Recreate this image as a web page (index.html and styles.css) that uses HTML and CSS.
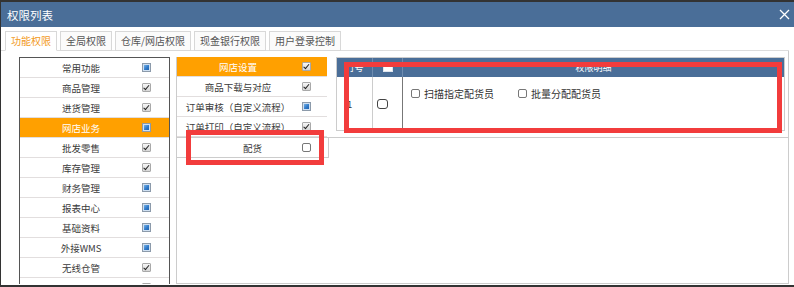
FILE: index.html
```html
<!DOCTYPE html>
<html lang="zh-CN">
<head>
    <meta charset="UTF-8">
    <title>权限列表</title>
    <link rel="stylesheet" href="styles.css">
</head>
<body>
    <div class="window">
        <!-- Title bar -->
        <div class="titlebar">
            <span class="title">权限列表</span>
            <svg class="close" width="11" height="11" viewBox="0 0 11 11">
                <path d="M1 1L10 10M10 1L1 10" stroke="#fff" stroke-width="1.3" fill="none"/>
            </svg>
        </div>

        <!-- Tabs -->
        <div class="tabs">
            <div class="tab active">功能权限</div>
            <div class="tab">全局权限</div>
            <div class="tab">仓库/网店权限</div>
            <div class="tab">现金银行权限</div>
            <div class="tab">用户登录控制</div>
        </div>

        <div class="content">
            <!-- Module list -->
            <div class="module-list">
                <div class="row"><span class="label">常用功能</span><span class="cb part"></span></div>
                <div class="row"><span class="label">商品管理</span><span class="cb on"></span></div>
                <div class="row"><span class="label">进货管理</span><span class="cb on"></span></div>
                <div class="row selected"><span class="label">网店业务</span><span class="cb part"></span></div>
                <div class="row"><span class="label">批发零售</span><span class="cb on"></span></div>
                <div class="row"><span class="label">库存管理</span><span class="cb on"></span></div>
                <div class="row"><span class="label">财务管理</span><span class="cb part"></span></div>
                <div class="row"><span class="label">报表中心</span><span class="cb part"></span></div>
                <div class="row"><span class="label">基础资料</span><span class="cb part"></span></div>
                <div class="row"><span class="label">外接WMS</span><span class="cb part"></span></div>
                <div class="row"><span class="label">无线仓管</span><span class="cb on"></span></div>
                <div class="row"><span class="label">其他设置</span><span class="cb on"></span></div>
            </div>

            <div class="side">
                <div class="upper">
                    <!-- Sub module list -->
                    <div class="sub-list">
                        <div class="row selected"><span class="label">网店设置</span><span class="cb on"></span></div>
                        <div class="row"><span class="label">商品下载与对应</span><span class="cb on"></span></div>
                        <div class="row"><span class="label">订单审核（自定义流程）</span><span class="cb part"></span></div>
                        <div class="row"><span class="label">订单打印（自定义流程）</span><span class="cb on"></span></div>
                    </div>

                    <!-- Detail table -->
                    <div class="detail-table">
                        <div class="thead">
                            <div class="th">行号</div>
                            <div class="th"><span class="cb head"></span></div>
                            <div class="th">权限明细</div>
                        </div>
                        <div class="tbody">
                            <div class="td num">1</div>
                            <div class="td check"><span class="cb off large"></span></div>
                            <div class="td items">
                                <span class="item"><span class="cb off"></span>扫描指定配货员</span>
                                <span class="item"><span class="cb off"></span>批量分配配货员</span>
                            </div>
                        </div>
                    </div>
                </div>

                <div class="panel">
                    <div class="row pick"><span class="label">配货</span><span class="cb off"></span></div>
                </div>
            </div>
        </div>

        <!-- Red highlight marks -->
        <div class="mark mark-detail"></div>
        <div class="mark mark-pick"></div>
    </div>
</body>
</html>
```

FILE: styles.css
```css
/* Reset */
* {
    box-sizing: border-box;
    margin: 0;
    padding: 0;
}

body {
    background: #333;
    font-family: "Noto Sans CJK SC", "Noto Sans", sans-serif;
    color: #3a3a3a;
    overflow: hidden;
}

/* Window */
.window {
    position: relative;
    margin: 2px 0 0 1px;
    height: 283px;
    background: #fff;
    overflow: hidden;
}

.titlebar {
    height: 25px;
    background: #4a6e98;
    color: #fff;
    display: flex;
    align-items: center;
    justify-content: space-between;
    padding: 0 4px 0 6px;
}

.title {
    font-size: 11.5px;
}

.close {
    display: block;
}

/* Tabs */
.tabs {
    display: flex;
    align-items: flex-end;
    gap: 3px;
    height: 24px;
    padding: 4px 0 0 4px;
    margin-right: 5px;
    border-bottom: 1px solid #ddd;
}

.tab {
    height: 20px;
    line-height: 18px;
    padding: 0 5px;
    margin-bottom: -1px;
    font-size: 10px;
    color: #555;
    background: #fbfbfb;
    border: 1px solid #d8d8d8;
}

.tab.active {
    color: #f29a1c;
    background: #fff;
    border-bottom-color: #fff;
}

/* Content */
.content {
    display: flex;
    height: 233px;
    margin-right: 5px;
    padding: 6px 0 0 18px;
    border-right: 1px solid #ccc;
}

.row {
    display: flex;
    align-items: center;
    height: 20px;
    border-bottom: 1px solid #e2dede;
    font-size: 9.5px;
}

.row .label {
    width: 122px;
    text-align: center;
    white-space: nowrap;
}

.row.selected {
    background: #ffa000;
    color: #fff;
}

.module-list {
    width: 151px;
    flex-shrink: 0;
    border: 1px solid #555;
    border-bottom: none;
    overflow: hidden;
}

.side {
    flex: 1;
    display: flex;
    flex-direction: column;
    margin-left: 6px;
}

.upper {
    display: flex;
    height: 80px;
}

.sub-list {
    width: 151px;
    border-left: 1px solid #ccc;
    overflow: hidden;
}

.sub-list .cb {
    margin-left: 3px;
}

/* Detail table */
.detail-table {
    width: 449px;
    height: 74px;
    margin-left: 9px;
    border: 1px solid #ccc;
}

.thead,
.tbody {
    display: grid;
    grid-template-columns: 36px 30px 1fr;
}

.thead {
    height: 19px;
    background: #4a6e98;
    color: #fff;
    font-size: 9px;
}

.th {
    display: flex;
    align-items: center;
    justify-content: center;
    border-right: 1px solid #6e8cb0;
}

.th:last-child {
    border-right: none;
}

.tbody {
    height: 53px;
    font-size: 9.5px;
}

.td.num {
    display: flex;
    align-items: center;
    padding-left: 10px;
    border-right: 1px solid #ccc;
}

.td.check {
    display: flex;
    align-items: center;
    padding-left: 4px;
    border-right: 1px solid #777;
}

.td.items {
    display: flex;
    align-items: flex-start;
    gap: 24px;
    padding: 9px 0 0 8px;
}

.item {
    display: flex;
    align-items: center;
    gap: 4px;
    font-size: 10px;
    color: #333;
}

/* Lower panel */
.panel {
    flex: 1;
    border: 1px solid #ccc;
    border-right: none;
}

.row.pick {
    width: 152px;
    border-right: 1px solid #ccc;
    border-bottom: 1px solid #ccc;
}

.row.pick .label {
    text-align: right;
    padding-right: 37px;
}

.row.pick .cb {
    margin-left: 3px;
}

/* Checkboxes */
.cb {
    position: relative;
    display: inline-block;
    flex-shrink: 0;
    width: 9px;
    height: 9px;
}

.cb.on {
    background: linear-gradient(#f6f6f6, #d6d6d6);
    border: 1px solid #a9a9a9;
    border-radius: 1px;
}

.cb.on::after {
    content: "";
    position: absolute;
    left: 2.3px;
    top: 0;
    width: 2px;
    height: 4.5px;
    border: solid #222;
    border-width: 0 1.5px 1.5px 0;
    transform: rotate(40deg);
}

.cb.part {
    border: 1px solid #8c9aaa;
    background: linear-gradient(135deg, #8cc4f0 0%, #3079c8 55%, #1c5aa2 100%);
    box-shadow: inset 0 0 0 1px #cfe0f2;
}

.cb.off {
    background: #fff;
    border: 1px solid #777;
    border-radius: 2px;
}

.cb.large {
    width: 11px;
    height: 10px;
    border-color: #444;
    border-radius: 3px;
}

.cb.head {
    width: 10px;
    height: 9px;
    background: #fff;
    border: 1px solid #dfe6ef;
}

/* Red highlight marks */
.mark {
    position: absolute;
    border: 5px solid #f23c3c;
}

.mark-detail {
    left: 343px;
    top: 60px;
    width: 438px;
    height: 71px;
}

.mark-pick {
    left: 185px;
    top: 128px;
    width: 138px;
    height: 35px;
}
```
